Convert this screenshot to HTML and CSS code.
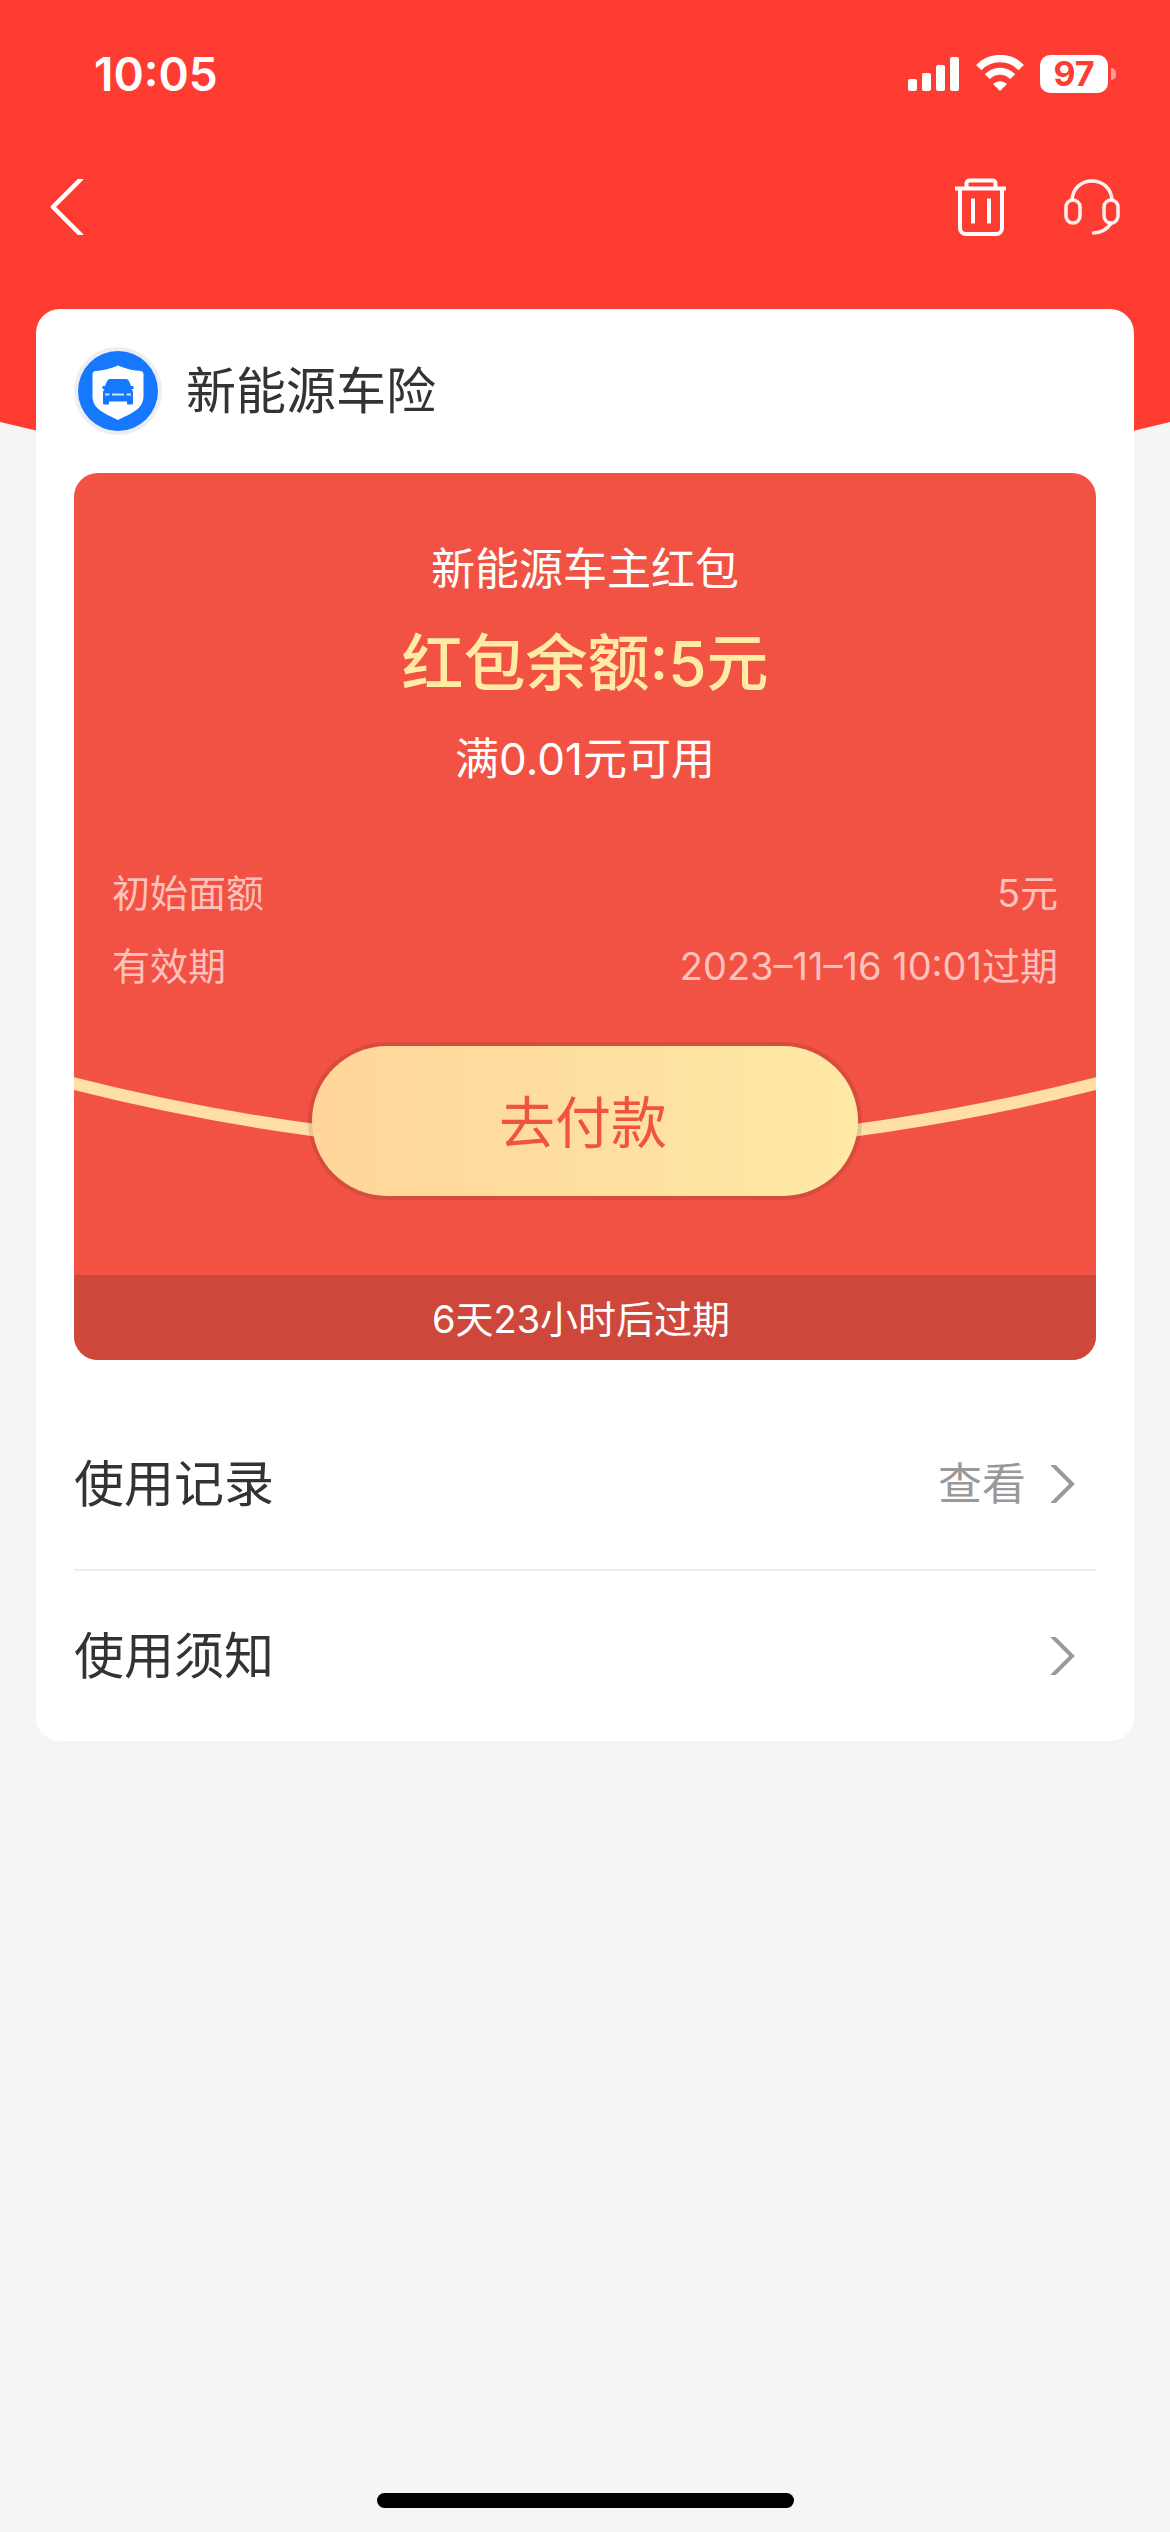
FILE: index.html
```html
<!DOCTYPE html>
<html lang="zh-CN">
<head>
  <meta charset="utf-8">
  <meta name="viewport" content="width=device-width, initial-scale=1">
  <title>新能源车险</title>
  <link rel="stylesheet" href="styles.css">
</head>
<body>
  <div class="page">
    <svg class="backdrop" viewBox="0 0 1170 496" preserveAspectRatio="none" aria-hidden="true">
      <path d="M0 0H1170V422Q585 568 0 422Z" fill="#ff3c32"/>
    </svg>

    <header class="header">
      <div class="status">
        <time class="status-time">10:05</time>
        <div class="status-icons">
          <svg width="52" height="38" viewBox="0 0 52 38" fill="#fff" aria-hidden="true">
            <rect x="0" y="24" width="9" height="12" rx="2"/>
            <rect x="14" y="18" width="9" height="18" rx="2"/>
            <rect x="28" y="10" width="9" height="26" rx="2"/>
            <rect x="42" y="2" width="9" height="34" rx="2"/>
          </svg>
          <svg width="48" height="38" viewBox="0 0 48 38" fill="none" stroke="#fff" aria-hidden="true">
            <path d="M2.8 12.6A29.5 29.5 0 0 1 45.200 12.600" stroke-width="7.500"/>
            <path d="M11.300 21.600A17.500 17.500 0 0 1 36.700 21.600" stroke-width="7"/>
            <path d="M24 36L17 29A10 10 0 0 1 31 29Z" fill="#fff" stroke="none"/>
          </svg>
          <div class="battery">
            <span class="battery-level">97</span>
            <span class="battery-cap"></span>
          </div>
        </div>
      </div>

      <nav class="nav">
        <button class="icon-button" type="button" aria-label="返回">
          <svg width="34" height="56" viewBox="0 0 34 56" fill="none" stroke="#fff" stroke-width="4.500" stroke-linejoin="round">
            <path d="M32 -1L3 28L32 57"/>
          </svg>
        </button>
        <div class="nav-actions">
          <button class="icon-button" type="button" aria-label="删除">
            <svg width="52" height="58" viewBox="0 0 52 58" fill="none" stroke="#fff" stroke-width="4">
              <path d="M0 10.500H51"/>
              <path d="M11.500 10V5.500A3 3 0 0 1 14.500 2.500H37.500A3 3 0 0 1 40.500 5.500V10"/>
              <path d="M5 11V50A6 6 0 0 0 11 56H41A6 6 0 0 0 47 50V11"/>
              <path d="M18 20.500V45.500M34 20.500V45.500"/>
            </svg>
          </button>
          <button class="icon-button" type="button" aria-label="客服">
            <svg width="56" height="58" viewBox="0 0 56 58" fill="none" stroke="#fff" stroke-opacity=".92" stroke-width="3.500" stroke-linecap="round">
              <rect x="2" y="22" width="14" height="23" rx="7"/>
              <rect x="40" y="22" width="14" height="23" rx="7"/>
              <path d="M8 21.500C9 10.500 17 3 28 3S47 10.500 48 21.500"/>
              <path d="M47 45.500C43 51.500 38 54.500 29.500 55"/>
            </svg>
          </button>
        </div>
      </nav>
    </header>

    <main class="card">
      <div class="merchant">
        <svg class="merchant-logo" width="88" height="88" viewBox="0 0 88 88" aria-hidden="true">
          <circle cx="44" cy="44" r="44" fill="#eeeeef"/>
          <circle cx="44" cy="44" r="40" fill="#1677ff"/>
          <path d="M44 18.500C52 22 60 23.500 67 24Q69.500 24.500 69.500 27V49C69.500 62 58 66 44 73C30 66 18.500 62 18.500 49V27Q18.500 24.500 21 24C28 23.500 36 22 44 18.500Z" fill="#fff"/>
          <g fill="#1677ff">
            <path d="M36 32H52Q54 32 55 34L57 39H59.500V42H57.500Q59 43.500 59 46V56.500Q59 57.500 58 57.500H54Q53 57.500 53 56.500V54.500H35V56.500Q35 57.500 34 57.500H30Q29 57.500 29 56.500V46Q29 43.500 30.500 42H28.500V39H31L33 34Q34 32 36 32Z"/>
            <path d="M31 46.500H35.500V48.500H31ZM38 46.500H50V48.500H38ZM52.500 46.500H57V48.500H52.500Z" fill="#cfe3ff"/>
          </g>
        </svg>
        <h1 class="merchant-name">新能源车险</h1>
      </div>

      <section class="coupon">
        <div class="coupon-summary">
          <p class="coupon-text">新能源车主红包</p>
          <p class="coupon-amount">红包余额:5元</p>
          <p class="coupon-text">满0.01元可用</p>
        </div>
        <dl class="coupon-details">
          <div class="detail"><dt>初始面额</dt><dd>5元</dd></div>
          <div class="detail"><dt>有效期</dt><dd>2023–11–16 10:01过期</dd></div>
        </dl>
        <div class="coupon-action">
          <svg class="ribbon" viewBox="0 0 1022 158" preserveAspectRatio="none" aria-hidden="true">
            <path d="M-20 36.500Q511 176 1042 36.500" fill="none" stroke="#ffdfa5" stroke-width="12.500"/>
          </svg>
          <button class="pay-button" type="button">去付款</button>
        </div>
        <p class="coupon-expiry">6天23小时后过期</p>
      </section>

      <ul class="links">
        <li>
          <a class="link" href="#records">
            <span class="link-label">使用记录</span>
            <span class="link-value">查看</span>
            <svg class="chevron" width="26" height="38" viewBox="0 0 26 38" aria-hidden="true"><path d="M2 -1L22 19L2 39"/></svg>
          </a>
        </li>
        <li>
          <a class="link" href="#notice">
            <span class="link-label">使用须知</span>
            <svg class="chevron" width="26" height="38" viewBox="0 0 26 38" aria-hidden="true"><path d="M2 -1L22 19L2 39"/></svg>
          </a>
        </li>
      </ul>
    </main>

    <div class="home-indicator"></div>
  </div>
</body>
</html>
```

FILE: styles.css
```css
* {
  box-sizing: border-box;
  margin: 0;
  padding: 0;
}

body {
  background: #f5f5f5;
  color: #333;
  font-family: Inter, "Noto Sans CJK SC", sans-serif;
  font-size: 44px;
}

button {
  border: 0;
  background: none;
  font-family: inherit;
  cursor: pointer;
}

svg {
  display: block;
}

.page {
  position: relative;
  display: flex;
  flex-direction: column;
  min-height: 100vh;
}

.backdrop {
  position: absolute;
  top: 0;
  left: 0;
  z-index: -1;
  width: 100%;
  height: 496px;
}

/* Status bar and navigation */

.status {
  display: flex;
  align-items: center;
  justify-content: space-between;
  height: 141px;
  padding: 7px 54px 0 94px;
  color: #fff;
}

.status-time {
  font-size: 46px;
  font-weight: 600;
  line-height: 56px;
}

.status-icons {
  display: flex;
  align-items: center;
  gap: 16px;
}

.battery {
  display: flex;
  align-items: center;
  gap: 3px;
}

.battery-level {
  width: 68px;
  border-radius: 10px;
  background: #fff;
  color: #ff3c32;
  font-size: 34px;
  font-weight: 700;
  line-height: 38px;
  text-align: center;
}

.battery-cap {
  width: 5px;
  height: 12px;
  border-radius: 0 6px 6px 0;
  background: rgba(255, 255, 255, 0.5);
}

.nav {
  display: flex;
  align-items: center;
  justify-content: space-between;
  height: 132px;
  padding: 0 50px;
}

.nav-actions {
  display: flex;
  align-items: center;
  gap: 57px;
}

/* Card */

.card {
  margin: 36px 36px 0;
  padding: 0 38px;
  border-radius: 24px;
  background: #fff;
}

.merchant {
  display: flex;
  align-items: center;
  gap: 24px;
  height: 164px;
}

.merchant-name {
  font-size: 50px;
  font-weight: 400;
  line-height: 70px;
}

.coupon {
  overflow: hidden;
  border-radius: 24px;
  background: #f25244;
  color: #fff;
}

.coupon-summary {
  display: flex;
  flex-direction: column;
  gap: 19px;
  padding-top: 65px;
  text-align: center;
}

.coupon-text {
  line-height: 62px;
}

.coupon-amount {
  color: #ffeba4;
  font-size: 62px;
  font-weight: 500;
  line-height: 90px;
}

.coupon-details {
  display: flex;
  flex-direction: column;
  gap: 19px;
  padding: 76px 38px 49px;
  color: #ffc1bb;
  font-size: 38px;
  line-height: 54px;
}

.detail {
  display: flex;
  justify-content: space-between;
}

.coupon-action {
  position: relative;
  display: flex;
  justify-content: center;
  margin-bottom: 75px;
}

.ribbon {
  position: absolute;
  top: 0;
  left: 0;
  width: 100%;
  height: 100%;
}

.pay-button {
  position: relative;
  width: 554px;
  height: 158px;
  padding: 0 4px 6px 0;
  border: 4px solid rgba(40, 40, 20, 0.13);
  border-radius: 79px;
  background: linear-gradient(90deg, #ffd59a, #fee9a5) padding-box;
  color: #f15343;
  font-size: 56px;
}

.coupon-expiry {
  padding: 3px 8px 0 0;
  background: #cd483b;
  font-size: 38px;
  line-height: 82px;
  text-align: center;
}

/* Links */

.links {
  padding-top: 39px;
  list-style: none;
}

.links li + li {
  border-top: 2px solid #eee;
}

.link {
  display: flex;
  align-items: center;
  height: 170px;
  padding-right: 20px;
  color: inherit;
  text-decoration: none;
}

.link-label {
  flex: 1;
  font-size: 50px;
  line-height: 70px;
}

.link-value {
  margin-right: 24px;
  color: #999;
  line-height: 62px;
}

.chevron {
  fill: none;
  stroke: #999;
  stroke-width: 4px;
}

.home-indicator {
  width: 417px;
  height: 15px;
  margin: auto auto 24px;
  border-radius: 8px;
  background: #000;
}
```
